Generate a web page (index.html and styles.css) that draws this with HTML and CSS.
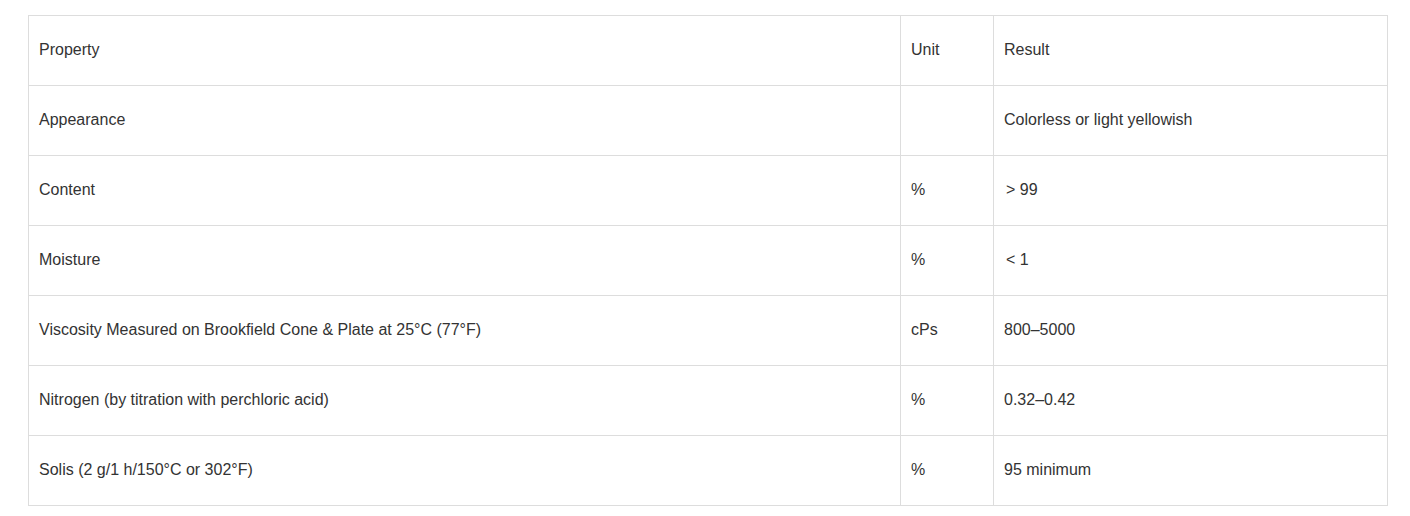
FILE: index.html
```html
<!DOCTYPE html>
<html>
<head>
<meta charset="utf-8">
<link rel="stylesheet" href="styles.css">
</head>
<body>
<div class="wrap">
<table class="spec">
<colgroup><col class="c1"><col class="c2"><col class="c3"></colgroup>
<tbody>
<tr><td>Property</td><td>Unit</td><td>Result</td></tr>
<tr><td>Appearance</td><td></td><td>Colorless or light yellowish</td></tr>
<tr><td>Content</td><td>%</td><td><span class="ind">&gt; 99</span></td></tr>
<tr><td>Moisture</td><td>%</td><td><span class="ind">&lt; 1</span></td></tr>
<tr><td>Viscosity Measured on Brookfield Cone &amp; Plate at 25°C (77°F)</td><td>cPs</td><td>800–5000</td></tr>
<tr><td>Nitrogen (by titration with perchloric acid)</td><td>%</td><td>0.32–0.42</td></tr>
<tr><td>Solis (2 g/1 h/150°C or 302°F)</td><td>%</td><td>95 minimum</td></tr>
</tbody>
</table>
</div>
</body>
</html>
```
FILE: styles.css
```css
html, body { margin: 0; padding: 0; background: #fff; }
.wrap { padding: 15px 0 0 28px; }
.spec {
  border-collapse: collapse;
  width: 1359px;
  table-layout: fixed;
  font-family: "Liberation Sans", Arial, sans-serif;
  font-size: 16px;
  color: #333;
}
.c1 { width: 872px; }
.c2 { width: 93px; }
.c3 { width: 394px; }
.spec td {
  border: 1px solid #ddd;
  height: 67px;
  padding: 0 10px 2px;
  vertical-align: middle;
  line-height: 20px;
}
.ind { padding-left: 2px; }
```
